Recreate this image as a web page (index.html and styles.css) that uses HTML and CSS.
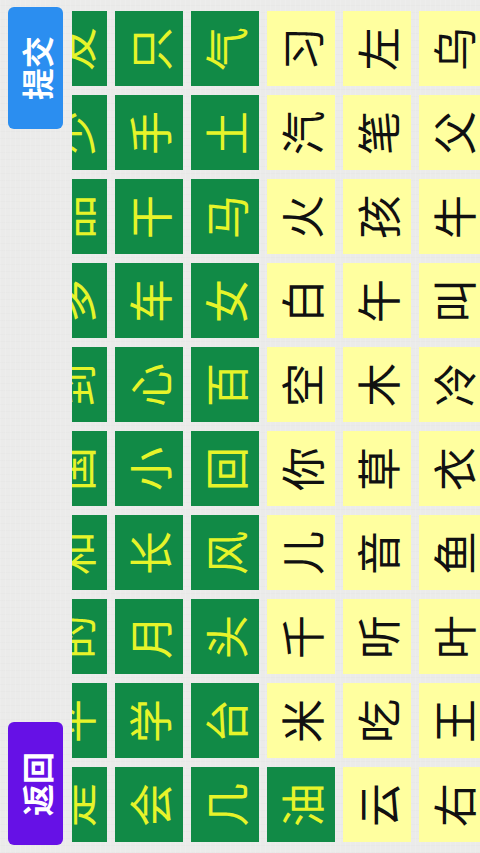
FILE: index.html
```html
<!DOCTYPE html>
<html lang="zh-CN">
<head>
<meta charset="utf-8">
<title>识字</title>
<link rel="stylesheet" href="styles.css">
</head>
<body>
<div class="screen">
  <div class="side">
    <div class="btn btn-submit"><span class="rot">提交</span></div>
    <div class="btn btn-back"><span class="rot">返回</span></div>
  </div>
  <div class="board">
    <div class="grid">
      <div class="cell g"><span class="rot">友</span></div>
      <div class="cell g"><span class="rot">只</span></div>
      <div class="cell g"><span class="rot">气</span></div>
      <div class="cell y"><span class="rot">习</span></div>
      <div class="cell y"><span class="rot">左</span></div>
      <div class="cell y"><span class="rot">乌</span></div>

      <div class="cell g"><span class="rot">少</span></div>
      <div class="cell g"><span class="rot">手</span></div>
      <div class="cell g"><span class="rot">土</span></div>
      <div class="cell y"><span class="rot">汽</span></div>
      <div class="cell y"><span class="rot">笔</span></div>
      <div class="cell y"><span class="rot">父</span></div>

      <div class="cell g"><span class="rot">品</span></div>
      <div class="cell g"><span class="rot">干</span></div>
      <div class="cell g"><span class="rot">马</span></div>
      <div class="cell y"><span class="rot">火</span></div>
      <div class="cell y"><span class="rot">孩</span></div>
      <div class="cell y"><span class="rot">牛</span></div>

      <div class="cell g"><span class="rot">多</span></div>
      <div class="cell g"><span class="rot">车</span></div>
      <div class="cell g"><span class="rot">女</span></div>
      <div class="cell y"><span class="rot">白</span></div>
      <div class="cell y"><span class="rot">午</span></div>
      <div class="cell y"><span class="rot">叫</span></div>

      <div class="cell g"><span class="rot">到</span></div>
      <div class="cell g"><span class="rot">心</span></div>
      <div class="cell g"><span class="rot">百</span></div>
      <div class="cell y"><span class="rot">空</span></div>
      <div class="cell y"><span class="rot">木</span></div>
      <div class="cell y"><span class="rot">冷</span></div>

      <div class="cell g"><span class="rot">国</span></div>
      <div class="cell g"><span class="rot">小</span></div>
      <div class="cell g"><span class="rot">回</span></div>
      <div class="cell y"><span class="rot">你</span></div>
      <div class="cell y"><span class="rot">草</span></div>
      <div class="cell y"><span class="rot">衣</span></div>

      <div class="cell g"><span class="rot">和</span></div>
      <div class="cell g"><span class="rot">长</span></div>
      <div class="cell g"><span class="rot">风</span></div>
      <div class="cell y"><span class="rot">儿</span></div>
      <div class="cell y"><span class="rot">音</span></div>
      <div class="cell y"><span class="rot">鱼</span></div>

      <div class="cell g"><span class="rot">的</span></div>
      <div class="cell g"><span class="rot">月</span></div>
      <div class="cell g"><span class="rot">头</span></div>
      <div class="cell y"><span class="rot">千</span></div>
      <div class="cell y"><span class="rot">听</span></div>
      <div class="cell y"><span class="rot">叶</span></div>

      <div class="cell g"><span class="rot">平</span></div>
      <div class="cell g"><span class="rot">学</span></div>
      <div class="cell g"><span class="rot">台</span></div>
      <div class="cell y"><span class="rot">米</span></div>
      <div class="cell y"><span class="rot">吃</span></div>
      <div class="cell y"><span class="rot">王</span></div>

      <div class="cell g"><span class="rot">是</span></div>
      <div class="cell g"><span class="rot">会</span></div>
      <div class="cell g"><span class="rot">几</span></div>
      <div class="cell g"><span class="rot">油</span></div>
      <div class="cell y"><span class="rot">云</span></div>
      <div class="cell y"><span class="rot">右</span></div>
    </div>
  </div>
</div>
</body>
</html>
```
FILE: styles.css
```css
html, body {
  margin: 0;
  padding: 0;
}
body {
  background: #e9e9e8;
  font-family: "Noto Sans CJK SC", "Noto Sans", sans-serif;
}
.screen {
  display: flex;
  width: 480px;
  height: 853px;
  overflow: hidden;
  background-color: #ebebea;
  background-image:
    repeating-linear-gradient(90deg, rgba(255,255,255,0.12) 0 1px, rgba(0,0,0,0) 1px 5px),
    repeating-linear-gradient(0deg, rgba(0,0,0,0.012) 0 1px, rgba(0,0,0,0) 1px 7px);
}
.side {
  flex: none;
  width: 55px;
  padding: 7px 9px 8px 8px;
  display: flex;
  flex-direction: column;
  justify-content: space-between;
}
.btn {
  height: 122px;
  border-radius: 6px;
  display: flex;
  align-items: center;
  justify-content: center;
  color: #ffffff;
  font-size: 32px;
  font-weight: 700;
}
.btn-submit {
  background: #2b8ef0;
}
.btn-back {
  background: #6611e6;
  height: 123px;
}
.rot {
  display: inline-block;
  white-space: nowrap;
  transform: rotate(-90deg);
}
.board {
  flex: 1;
  overflow: hidden;
  padding-top: 11px;
}
.grid {
  display: grid;
  grid-template-columns: repeat(6, 68px);
  grid-template-rows: repeat(10, 75px);
  column-gap: 8px;
  row-gap: 9px;
  margin-left: -33px;
  width: 448px;
}
.cell {
  display: flex;
  align-items: center;
  justify-content: center;
  font-size: 44px;
  line-height: 1;
}
.cell.g {
  background: #118a46;
  color: #e6f42a;
}
.cell.y {
  background: #ffff9f;
  color: #111111;
}
```
